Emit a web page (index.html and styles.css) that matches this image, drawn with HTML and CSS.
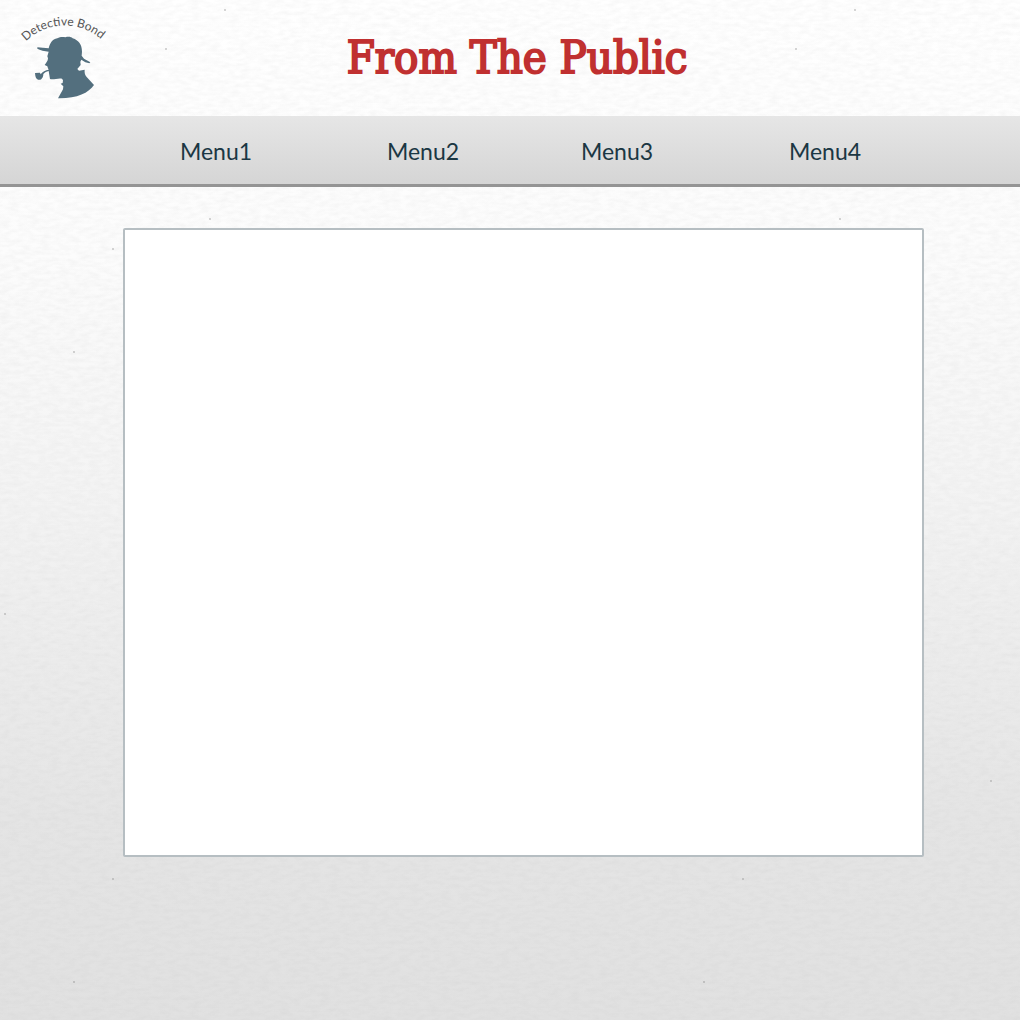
FILE: index.html
```html
<!DOCTYPE html>
<html lang="en">
<head>
<meta charset="utf-8">
<meta name="viewport" content="width=device-width, initial-scale=1">
<title>From The Public</title>
<link rel="stylesheet" href="styles.css">
</head>
<body>
<header class="header">
  <a class="logo" href="#" aria-label="Detective Bond">
    <svg class="logo-art" viewBox="0 0 330 315">
      <path id="arc" fill="none" d="M48 106A164 164 0 0 1 290 118"/>
      <text class="logo-text"><textPath href="#arc">Detective Bond</textPath></text>
      <path class="logo-head" transform="translate(60 75)" d="M22 49L56 52C60 38 66 25 82 22C90 17 100 18 106 19C116 16 124 18 128 22C146 28 156 40 156 62L155 74L162 83L181 94L178 97L166 94L154 86L151 92L152 102L142 114L147 119L164 116C163 126 165 132 170 138L192 162C176 186 140 203 84 202L99 175L100 166L92 158L98 156L99 148L96 143C86 140 70 147 60 144L58 132L56 120C50 121 44 125 40 129C40 140 34 149 24 146C16 142 16 134 15 126L30 125L32 130C38 122 46 117 56 116L54 112L52 106L44 102C48 96 54 90 54 82L52 76L56 62C44 60 30 58 22 53Z"/>
    </svg>
  </a>
  <h1 class="title">From The Public</h1>
</header>
<nav class="menu">
  <a class="menu-link" href="#">Menu1</a>
  <a class="menu-link" href="#">Menu2</a>
  <a class="menu-link" href="#">Menu3</a>
  <a class="menu-link" href="#">Menu4</a>
</nav>
<main class="content">
  <section class="panel"></section>
</main>
</body>
</html>
```
FILE: styles.css
```css
* {
  box-sizing: border-box;
}

body {
  margin: 0;
  min-height: 100vh;
  font-family: Lato, "Liberation Sans", sans-serif;
  /* woven paper grain over a soft vertical shade */
  background:
    url("data:image/svg+xml,%3Csvg xmlns='http://www.w3.org/2000/svg' width='630' height='630'%3E%3Cfilter id='n' x='0' y='0' width='100%25' height='100%25'%3E%3CfeTurbulence type='fractalNoise' baseFrequency='.1 .25' numOctaves='2' stitchTiles='stitch'/%3E%3CfeColorMatrix values='0 0 0 0 .4 0 0 0 0 .4 0 0 0 0 .4 .16 0 0 0 -.05'/%3E%3C/filter%3E%3Crect width='630' height='630' filter='url(%23n)'/%3E%3Cg fill='%23777' fill-opacity='.4'%3E%3Ccircle cx='113' cy='249' r='1'/%3E%3Ccircle cx='166' cy='49' r='1'/%3E%3Ccircle cx='225' cy='10' r='1'/%3E%3Ccircle cx='74' cy='352' r='1'/%3E%3Ccircle cx='5' cy='614' r='1'/%3E%3Ccircle cx='361' cy='151' r='1'/%3E%3Ccircle cx='210' cy='219' r='1'/%3E%3C/g%3E%3C/svg%3E"),
    linear-gradient(#ffffff 0, #fcfcfc 25%, #f3f3f3 50%, #e5e5e5 80%, #e1e1e1 100%);
}

.header {
  display: grid;
  grid-template-columns: 110px 1fr 106px;
  align-items: center;
  min-height: 116px;
  padding: 0 0 0 10px;
}

.logo-art {
  display: block;
  width: 110px;
  height: 105px;
}

.logo-text {
  font-family: Lato, "Liberation Sans", sans-serif;
  font-size: 36px;
  fill: #555555;
}

.logo-head {
  fill: #536f7e;
}

.title {
  margin: 0;
  color: #c03030;
  font: 400 45px/56px "DejaVu Serif Condensed", "DejaVu Serif", serif;
  text-align: center;
  -webkit-text-stroke: 2px #c03030;
}

.menu {
  display: grid;
  grid-template-columns: 220fr 194fr 194fr 222fr;
  padding: 0 84px 0 106px;
  border-bottom: 3px solid #949494;
  background: linear-gradient(#e6e6e6, #d5d5d5);
}

.menu-link {
  padding: 19px 0 17px;
  color: #1b3743;
  font-size: 23px;
  line-height: 32px;
  text-align: center;
  text-decoration: none;
}

.content {
  padding: 41px 96px 40px 123px;
}

.panel {
  min-height: 629px;
  border: 2px solid #b6bec2;
  border-radius: 2px;
  background: #ffffff;
}
```
